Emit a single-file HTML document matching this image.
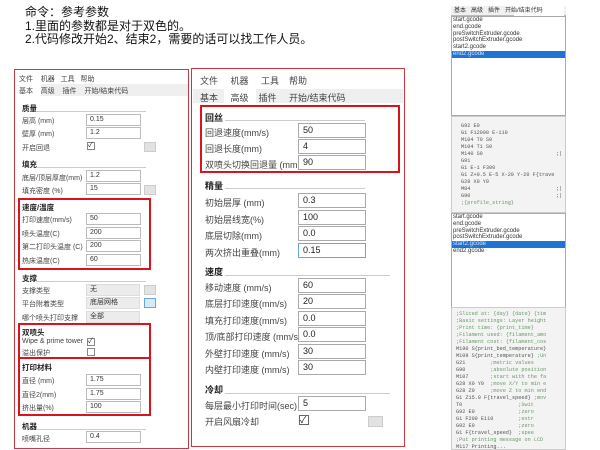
<!DOCTYPE html>
<html><head><meta charset="utf-8"><style>
*{margin:0;padding:0;box-sizing:border-box}
body{width:600px;height:450px;background:#fff;position:relative;overflow:hidden;font-family:"Liberation Sans","Noto Sans CJK SC",sans-serif;color:#222}
.a{position:absolute;white-space:nowrap}
.frame{position:absolute;border:1.5px solid #c8383e}
.red{position:absolute;border:2px solid #d9141d}
.l{font-size:7px;color:#444}
.in{position:absolute;border:1px solid #bbb;background:#fff;font-size:7px;padding-left:3px;color:#333;line-height:10px}
.h{font-size:7.5px;font-weight:bold;color:#222}
.ln{position:absolute;height:1px;background:#ccc}
.m{font-size:9px;color:#444}
.mh{font-size:9px;font-weight:bold}
.min{position:absolute;border:1px solid #aaa;background:#fff;font-size:9px;padding-left:4px;line-height:13px;height:15px}
.btn{position:absolute;background:#e2e2e2;border:1px solid #ccc}
.code{font-family:"Liberation Mono",monospace;font-size:5.2px;color:#555;line-height:7px}
.lst{font-size:6px;line-height:6.8px;color:#333}
.g{color:#6a9a6a}
</style></head><body>
<div class="a" style="left:25px;top:6px;font-size:12px;line-height:13.5px;color:#111">命令：参考参数<br>1.里面的参数都是对于双色的。<br>2.代码修改开始2、结束2，需要的话可以找工作人员。</div>

<!-- LEFT PANEL -->
<div class="frame" style="left:14px;top:69px;width:175px;height:380px"></div>
<div class="a l" style="left:19px;top:74px">文件&nbsp;&nbsp;&nbsp;&nbsp;机器&nbsp;&nbsp;&nbsp;工具&nbsp;&nbsp;&nbsp;帮助</div>
<div class="a" style="left:16px;top:84px;width:172px;height:12px;background:#efefef"></div>
<div class="a" style="left:16px;top:84px;width:25px;height:12px;background:#fff"></div>
<div class="a l" style="left:19px;top:86px">基本&nbsp;&nbsp;&nbsp;&nbsp;高级&nbsp;&nbsp;&nbsp;&nbsp;插件&nbsp;&nbsp;&nbsp;&nbsp;开始/结束代码</div>
<div class="a h" style="left:22px;top:103px">质量</div><div class="ln" style="left:36px;top:111px;width:110px"></div>
<div class="a l" style="left:22px;top:116px">层高 (mm)</div><div class="in" style="left:86px;top:114px;width:55px;height:12px">0.15</div>
<div class="a l" style="left:22px;top:129px">壁厚 (mm)</div><div class="in" style="left:86px;top:127px;width:55px;height:12px">1.2</div>
<div class="a l" style="left:22px;top:143px">开启回退</div><div class="a" style="left:87px;top:142px;width:8px;height:8px;border:1px solid #888;font-size:7px;line-height:6px">✓</div><div class="btn" style="left:144px;top:142px;width:12px;height:10px"></div>
<div class="a h" style="left:22px;top:159px">填充</div><div class="ln" style="left:36px;top:167px;width:110px"></div>
<div class="a l" style="left:22px;top:173px">底层/顶层厚度(mm)</div><div class="in" style="left:86px;top:170px;width:55px;height:12px">1.2</div>
<div class="a l" style="left:22px;top:186px">填充密度 (%)</div><div class="in" style="left:86px;top:183px;width:55px;height:12px">15</div><div class="btn" style="left:144px;top:185px;width:12px;height:10px"></div>
<div class="red" style="left:18px;top:198px;width:133px;height:72px"></div>
<div class="a h" style="left:22px;top:202px">速度/温度</div>
<div class="a l" style="left:22px;top:215px">打印速度(mm/s)</div><div class="in" style="left:86px;top:213px;width:55px;height:12px">50</div>
<div class="a l" style="left:22px;top:229px">喷头温度(C)</div><div class="in" style="left:86px;top:227px;width:55px;height:12px">200</div>
<div class="a l" style="left:22px;top:242px">第二打印头温度 (C)</div><div class="in" style="left:86px;top:240px;width:55px;height:12px">200</div>
<div class="a l" style="left:22px;top:256px">热床温度(C)</div><div class="in" style="left:86px;top:254px;width:55px;height:12px">60</div>
<div class="a h" style="left:22px;top:273px">支撑</div><div class="ln" style="left:36px;top:281px;width:110px"></div>
<div class="a l" style="left:22px;top:286px">支撑类型</div><div class="in" style="left:86px;top:284px;width:54px;height:12px;background:#ececec;border-color:#ddd">无</div><div class="btn" style="left:144px;top:285px;width:12px;height:10px"></div>
<div class="a l" style="left:22px;top:299px">平台附着类型</div><div class="in" style="left:86px;top:297px;width:54px;height:12px;background:#ececec;border-color:#ddd">底层网格</div><div class="btn" style="left:144px;top:298px;width:12px;height:10px;background:#d6eaf6;border-color:#6aa9d6"></div>
<div class="a l" style="left:22px;top:313px">哪个喷头打印支撑</div><div class="in" style="left:86px;top:311px;width:54px;height:12px;background:#ececec;border-color:#ddd">全部</div>
<div class="red" style="left:18px;top:323px;width:133px;height:36px"></div>
<div class="a h" style="left:22px;top:327px">双喷头</div>
<div class="a l" style="left:22px;top:338px">Wipe &amp; prime tower</div><div class="a" style="left:87px;top:338px;width:8px;height:8px;border:1px solid #888;font-size:7px;line-height:6px">✓</div>
<div class="a l" style="left:22px;top:348px">溢出保护</div><div class="a" style="left:87px;top:348px;width:8px;height:8px;border:1px solid #888"></div>
<div class="red" style="left:18px;top:357px;width:133px;height:59px"></div>
<div class="a h" style="left:22px;top:362px">打印材料</div>
<div class="a l" style="left:22px;top:376px">直径 (mm)</div><div class="in" style="left:86px;top:374px;width:55px;height:12px">1.75</div>
<div class="a l" style="left:22px;top:390px">直径2(mm)</div><div class="in" style="left:86px;top:388px;width:55px;height:12px">1.75</div>
<div class="a l" style="left:22px;top:403px">挤出量(%)</div><div class="in" style="left:86px;top:401px;width:55px;height:12px">100</div>
<div class="a h" style="left:22px;top:421px">机器</div><div class="ln" style="left:36px;top:429px;width:110px"></div>
<div class="a l" style="left:22px;top:434px">喷嘴孔径</div><div class="in" style="left:86px;top:431px;width:55px;height:12px">0.4</div>

<!-- MIDDLE PANEL -->
<div class="frame" style="left:191px;top:68px;width:214px;height:379px"></div>
<div class="a m" style="left:200px;top:74px">文件&nbsp;&nbsp;&nbsp;&nbsp;&nbsp;机器&nbsp;&nbsp;&nbsp;&nbsp;&nbsp;工具&nbsp;&nbsp;&nbsp;&nbsp;帮助</div>
<div class="a" style="left:193px;top:89px;width:210px;height:14px;background:#efefef"></div>
<div class="a" style="left:224px;top:88px;width:32px;height:16px;background:#fff"></div>
<div class="a m" style="left:200px;top:91px">基本&nbsp;&nbsp;&nbsp;&nbsp;&nbsp;高级&nbsp;&nbsp;&nbsp;&nbsp;插件&nbsp;&nbsp;&nbsp;&nbsp;&nbsp;开始/结束代码</div>
<div class="red" style="left:200px;top:105px;width:200px;height:68px"></div>
<div class="a mh" style="left:205px;top:111px">回丝</div><div class="ln" style="left:225px;top:120px;width:140px"></div>
<div class="a m" style="left:205px;top:126px">回退速度(mm/s)</div><div class="min" style="left:298px;top:123px;width:68px">50</div>
<div class="a m" style="left:205px;top:142px">回退长度(mm)</div><div class="min" style="left:298px;top:139px;width:68px">4</div>
<div class="a m" style="left:205px;top:158px">双喷头切换回退量 (mm)</div><div class="min" style="left:298px;top:155px;width:68px">90</div>
<div class="a mh" style="left:205px;top:179px">精量</div><div class="ln" style="left:225px;top:188px;width:140px"></div>
<div class="a m" style="left:205px;top:196px">初始层厚 (mm)</div><div class="min" style="left:298px;top:193px;width:68px">0.3</div>
<div class="a m" style="left:205px;top:213px">初始层线宽(%)</div><div class="min" style="left:298px;top:210px;width:68px">100</div>
<div class="a m" style="left:205px;top:229px">底层切除(mm)</div><div class="min" style="left:298px;top:226px;width:68px">0.0</div>
<div class="a m" style="left:205px;top:246px">两次挤出重叠(mm)</div><div class="min" style="left:298px;top:243px;width:68px;border-color:#6aa9d6">0.15</div>
<div class="a mh" style="left:205px;top:265px">速度</div><div class="ln" style="left:225px;top:275px;width:165px"></div>
<div class="a m" style="left:205px;top:281px">移动速度 (mm/s)</div><div class="min" style="left:298px;top:278px;width:68px">60</div>
<div class="a m" style="left:205px;top:297px">底层打印速度(mm/s)</div><div class="min" style="left:298px;top:294px;width:68px">20</div>
<div class="a m" style="left:205px;top:314px">填充打印速度(mm/s)</div><div class="min" style="left:298px;top:311px;width:68px">0.0</div>
<div class="a m" style="left:205px;top:330px">顶/底部打印速度 (mm/s)</div><div class="min" style="left:298px;top:327px;width:68px">0.0</div>
<div class="a m" style="left:205px;top:347px">外壁打印速度 (mm/s)</div><div class="min" style="left:298px;top:344px;width:68px">30</div>
<div class="a m" style="left:205px;top:363px">内壁打印速度 (mm/s)</div><div class="min" style="left:298px;top:360px;width:68px">30</div>
<div class="a mh" style="left:205px;top:383px">冷却</div><div class="ln" style="left:225px;top:393px;width:165px"></div>
<div class="a m" style="left:205px;top:399px">每层最小打印时间(sec)</div><div class="min" style="left:298px;top:396px;width:68px">5</div>
<div class="a m" style="left:205px;top:415px">开启风扇冷却</div><div class="a" style="left:299px;top:415px;width:10px;height:10px;border:1px solid #666;font-size:9px;line-height:8px">✓</div><div class="btn" style="left:368px;top:416px;width:15px;height:11px"></div>

<!-- RIGHT TOP -->
<div class="a" style="left:451px;top:6px;width:115px;height:10px;background:#f0f0f0;border-bottom:1px solid #bbb"></div>
<div class="a" style="left:514px;top:6px;width:50px;height:11px;background:#fff"></div>
<div class="a lst" style="left:454px;top:8px">基本&nbsp;&nbsp;&nbsp;高级&nbsp;&nbsp;&nbsp;插件&nbsp;&nbsp;&nbsp;开始/结束代码</div>
<div class="a" style="left:451px;top:16px;width:115px;height:100px;border:1px solid #aaa;background:#fff"></div>
<div class="a" style="left:452px;top:51px;width:113px;height:7px;background:#1f73d2"></div>
<div class="a lst" style="left:453px;top:17px">start.gcode<br>end.gcode<br>preSwitchExtruder.gcode<br>postSwitchExtruder.gcode<br>start2.gcode<br><span style="color:#cfe3ff">end2.gcode</span></div>
<div class="a" style="left:451px;top:116px;width:115px;height:97px;background:#f3f3f3;border:1px solid #ccc"></div>
<div class="a code" style="left:461px;top:123px">G92 E0<br>G1 F12000 E-110<br>M104 T0 S0<br>M104 T1 S0<br>M140 S0<br>G91<br>G1 E-1 F300<br>G1 Z+0.5 E-5 X-20 Y-20 F{trave<br>G28 X0 Y0<br>M84<br>G90<br><span class="g">;{profile_string}</span></div>
<div class="a code" style="left:556px;top:151px">;|<br><br><br><br><br>;|<br>;|</div>

<!-- RIGHT BOTTOM -->
<div class="a" style="left:451px;top:213px;width:115px;height:95px;border:1px solid #aaa;background:#fff"></div>
<div class="a" style="left:452px;top:241px;width:113px;height:7px;background:#1f73d2"></div>
<div class="a lst" style="left:453px;top:214px">start.gcode<br>end.gcode<br>preSwitchExtruder.gcode<br>postSwitchExtruder.gcode<br><span style="color:#cfe3ff">start2.gcode</span><br>end2.gcode</div>
<div class="a" style="left:451px;top:307px;width:115px;height:143px;background:#f3f3f3;border:1px solid #ccc;overflow:hidden">
<div class="code" style="padding:3px 0 0 4px;white-space:pre"><span class="g">;Sliced at: {day} {date} {tim
;Basic settings: Layer height
;Print time: {print_time}
;Filament used: {filament_amo
;Filament cost: {filament_cos</span>
M190 S{print_bed_temperature}
M109 S{print_temperature} <span class="g">;Un</span>
G21        <span class="g">;metric values</span>
G90        <span class="g">;absolute position</span>
M107       <span class="g">;start with the fa</span>
G28 X0 Y0  <span class="g">;move X/Y to min e</span>
G28 Z0     <span class="g">;move Z to min end</span>
G1 Z15.0 F{travel_speed} <span class="g">;mov</span>
T0                  <span class="g">;Swit</span>
G92 E0              <span class="g">;zero</span>
G1 F200 E110        <span class="g">;extr</span>
G92 E0              <span class="g">;zero</span>
G1 F{travel_speed}  <span class="g">;spee</span>
<span class="g">;Put printing message on LCD </span>
M117 Printing...</div></div>
</body></html>
